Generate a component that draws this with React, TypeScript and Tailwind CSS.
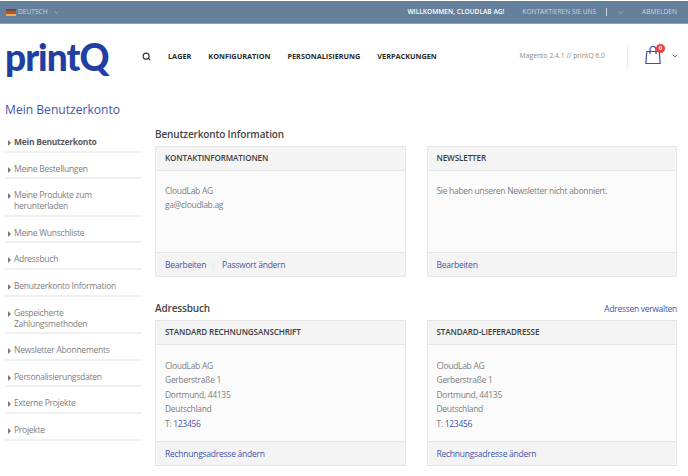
import { ChevronDown, Search } from 'lucide-react';

const sidebarItems = [
  { lines: ['Mein Benutzerkonto'], active: true, height: 'h-[27px]' },
  { lines: ['Meine Bestellungen'], height: 'h-[26px]' },
  { lines: ['Meine Produkte zum', 'herunterladen'], height: 'h-[38px]' },
  { lines: ['Meine Wunschliste'], height: 'h-[26px]' },
  { lines: ['Adressbuch'], height: 'h-[27px]' },
  { lines: ['Benutzerkonto Information'], height: 'h-[27px]' },
  { lines: ['Gespeicherte', 'Zahlungsmethoden'], height: 'h-[37px]' },
  { lines: ['Newsletter Abonnements'], height: 'h-[27px]' },
  { lines: ['Personalisierungsdaten'], height: 'h-[26px]' },
  { lines: ['Externe Projekte'], height: 'h-[27px]' },
  { lines: ['Projekte'], height: 'h-[27px]' },
];

const navItems = ['LAGER', 'KONFIGURATION', 'PERSONALISIERUNG', 'VERPACKUNGEN'];

// Petit drapeau allemand de la barre du haut
function Flag() {
  return (
    <div className="flex h-[7px] w-[10px] flex-col">
      <div className="h-[2px] bg-[#6b4a44]" />
      <div className="h-[3px] bg-[#d2453a]" />
      <div className="h-[2px] bg-[#e8b64c]" />
    </div>
  );
}

function CartIcon() {
  return (
    <svg width="16" height="18" viewBox="0 0 16 18" fill="none" stroke="#3b4fa8" strokeWidth="1.2">
      <path d="M1.8 5.5h12.4l1 12H0.8z" strokeLinejoin="round" />
      <path d="M5 8V3.5a3 3 0 0 1 6 0V8" />
    </svg>
  );
}

function Card({
  title,
  bodyClass,
  children,
  footer,
}: {
  title: string;
  bodyClass: string;
  children: React.ReactNode;
  footer: React.ReactNode;
}) {
  return (
    <div className="flex-1 border border-[#e6e6e6] bg-[#fbfbfb]">
      <div className="flex h-[24px] items-center border-b border-[#e6e6e6] bg-[#f4f4f4] px-[9px] text-[8.1px] font-semibold tracking-[-0.12px] text-[#3d3d3d]">
        {title}
      </div>
      <div className={`${bodyClass} px-[9px] text-[8.5px] leading-[14.4px] tracking-[-0.3px] text-[#808080]`}>{children}</div>
      <div className="flex h-[24px] items-center border-t border-[#e6e6e6] bg-[#f4f4f4] px-[9px] pt-px text-[8.5px] tracking-[-0.25px] text-[#4355a8]">
        {footer}
      </div>
    </div>
  );
}

function Address() {
  return (
    <>
      <p>CloudLab AG</p>
      <p>Gerberstraße 1</p>
      <p>Dortmund, 44135</p>
      <p>Deutschland</p>
      <p>
        T: <span className="text-[#4355a8]">123456</span>
      </p>
    </>
  );
}

export default function App() {
  return (
    <div className="h-[476px] w-[688px] overflow-hidden bg-white font-['Open_Sans',sans-serif]">
      {/* Barre du haut */}
      <div className="mt-px flex h-[23px] items-center border-b border-[#8ea3b8] bg-[#64809b] pl-[6px] pr-[11px] text-[6.6px] text-[#c9d4de]">
        <Flag />
        <span className="ml-[2px]">DEUTSCH</span>
        <ChevronDown size={7} className="ml-[5px]" />
        <span className="ml-auto font-semibold text-white">WILLKOMMEN, CLOUDLAB AG!</span>
        <span className="ml-[18px]">KONTAKTIEREN SIE UNS</span>
        <div className="ml-[10px] h-[8px] w-px bg-[#c9d4de]" />
        <ChevronDown size={7} className="ml-[10px]" />
        <span className="ml-[18px]">ABMELDEN</span>
      </div>

      {/* En-tête */}
      <div className="flex h-[64px] items-center pl-[5px] pr-[9px]">
        <span className="w-[137px] text-[37px] font-black leading-none tracking-[-1px] text-[#1f3fa3] font-['Lato',sans-serif]">
          printQ
        </span>
        <Search size={9} strokeWidth={3} className="text-[#333333]" />
        <div className="ml-[17px] flex gap-[17px] text-[7.3px] font-bold text-[#2b2b2b]">
          {navItems.map((item) => (
            <span key={item}>{item}</span>
          ))}
        </div>
        <span className="ml-auto text-[6.8px] text-[#8a8a8a]">Magento 2.4.1 // printQ 6.0</span>
        <div className="ml-[22px] h-[25px] w-px bg-[#ececec]" />
        <div className="relative ml-[17px] mb-[3px]">
          <CartIcon />
          <span className="absolute left-[11px] top-[-2px] flex h-[9px] w-[9px] items-center justify-center rounded-full bg-[#ef4136] text-[6px] font-bold leading-none text-white">
            0
          </span>
        </div>
        <ChevronDown size={8} strokeWidth={3} className="ml-[10px] text-[#777777]" />
      </div>

      <h1 className="mt-[13px] pl-[5px] text-[12.1px] leading-[18px] text-[#4355a8]">Mein Benutzerkonto</h1>

      <div className="mt-[7px] flex pl-[5px] pr-[11px]">
        {/* Menu latéral */}
        <aside className="w-[137px] shrink-0 text-[8.5px] leading-[10.7px] tracking-[-0.25px] text-[#808080]">
          {sidebarItems.map((item) => (
            <div
              key={item.lines[0]}
              className={`${item.height} flex items-start border-b-2 border-[#f0f0f0] pt-[11px] ${item.active ? 'font-bold text-[#5c5c5c]' : ''}`}
            >
              <span className="ml-[3px] mt-[3px] h-0 w-0 border-y-[3px] border-l-[3px] border-y-transparent border-l-[#777777]" />
              <span className="ml-[3px]">
                {item.lines.map((line) => (
                  <span key={line} className="block">
                    {line}
                  </span>
                ))}
              </span>
            </div>
          ))}
        </aside>

        <main className="ml-[13px] flex-1">
          <h2 className="text-[10px] font-semibold leading-[16px] tracking-[-0.15px] text-[#444444]">Benutzerkonto Information</h2>
          <div className="mt-[4px] flex gap-[21px]">
            <Card
              title="KONTAKTINFORMATIONEN"
              bodyClass="h-[81px] pt-[13px]"
              footer={
                <>
                  <span>Bearbeiten</span>
                  <span className="ml-[7px] h-[8px] w-px bg-[#ebebeb]" />
                  <span className="ml-[8px]">Passwort ändern</span>
                </>
              }
            >
              <p>CloudLab AG</p>
              <p>ga@cloudlab.ag</p>
            </Card>
            <Card title="NEWSLETTER" bodyClass="h-[81px] pt-[13px]" footer={<span>Bearbeiten</span>}>
              <p>Sie haben unseren Newsletter nicht abonniert.</p>
            </Card>
          </div>

          <div className="mt-[23px] flex items-end justify-between">
            <h2 className="text-[10px] font-semibold leading-[16px] tracking-[-0.15px] text-[#444444]">Adressbuch</h2>
            <span className="text-[8.5px] leading-[15px] tracking-[-0.3px] text-[#4355a8]">Adressen verwalten</span>
          </div>
          <div className="mt-[4px] flex gap-[21px]">
            <Card title="STANDARD RECHNUNGSANSCHRIFT" bodyClass="h-[96px] pt-[14px]" footer={<span>Rechnungsadresse ändern</span>}>
              <Address />
            </Card>
            <Card title="STANDARD-LIEFERADRESSE" bodyClass="h-[96px] pt-[14px]" footer={<span>Rechnungsadresse ändern</span>}>
              <Address />
            </Card>
          </div>
        </main>
      </div>
    </div>
  );
}
